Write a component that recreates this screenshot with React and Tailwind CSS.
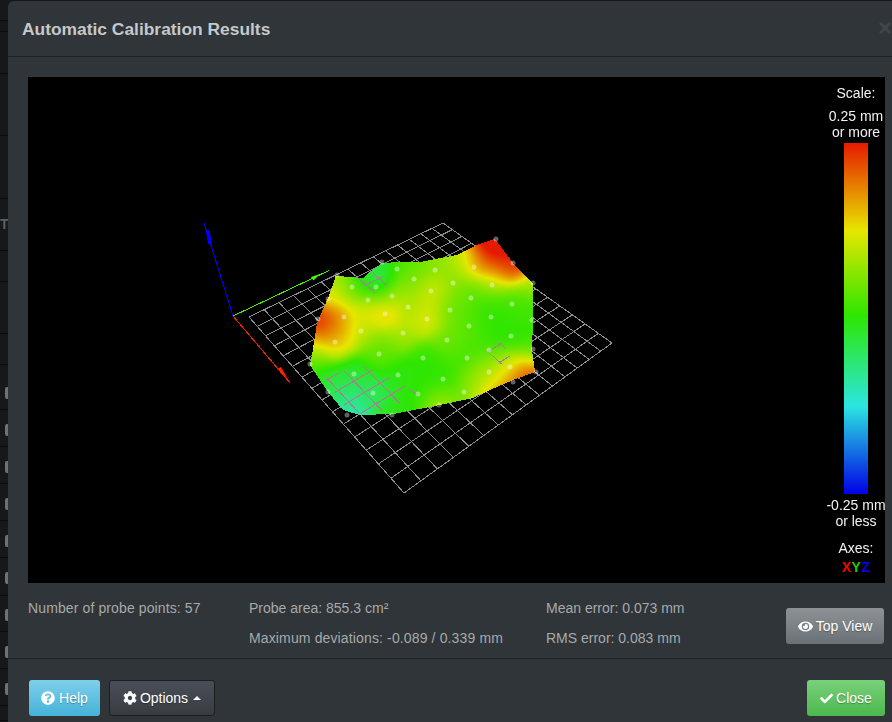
import React, { useEffect, useRef } from "react";
import { FaQuestionCircle, FaCog, FaEye, FaCheck } from "react-icons/fa";

const W = 857, H = 506, OX = 28, OY = 77;
const L = [249, 317], B = [404, 493], R = [612, 343], T = [443, 223];

function homography(p0, p1, p2, p3) {
  const dx1 = p1[0] - p2[0], dx2 = p3[0] - p2[0], sx = p0[0] - p1[0] + p2[0] - p3[0];
  const dy1 = p1[1] - p2[1], dy2 = p3[1] - p2[1], sy = p0[1] - p1[1] + p2[1] - p3[1];
  const d = dx1 * dy2 - dx2 * dy1;
  const g = (sx * dy2 - dx2 * sy) / d, h = (dx1 * sy - sx * dy1) / d;
  const a = p1[0] - p0[0] + g * p1[0], b = p3[0] - p0[0] + h * p3[0], c = p0[0];
  const e = p1[1] - p0[1] + g * p1[1], f = p3[1] - p0[1] + h * p3[1], k = p0[1];
  return (u, v) => {
    const w = g * u + h * v + 1;
    return [(a * u + b * v + c) / w, (e * u + f * v + k) / w];
  };
}
const project = homography(L, B, R, T);
const CELLS = 15;
const seg = ([a, b]) => `M${a[0].toFixed(1)} ${a[1].toFixed(1)}L${b[0].toFixed(1)} ${b[1].toFixed(1)}`;
let gridPath = "";
for (let i = 0; i <= CELLS; i++) {
  gridPath += seg([project(i / CELLS, 0), project(i / CELLS, 1)]);
  gridPath += seg([project(0, i / CELLS), project(1, i / CELLS)]);
}

const outline = [
  [336, 276], [353, 277], [363, 278], [370, 272], [382, 263], [400, 262], [420, 262], [457, 255], [477, 245], [495, 239],
  [513, 263], [533, 283], [533, 320], [532, 350], [535, 372], [513, 380], [490, 390], [473, 398], [440, 405], [393, 414],
  [360, 415], [343, 410], [328, 392], [310, 365], [312, 355], [317, 323], [328, 298],
];

const z = (pts) => pts.map(([x, y]) => `${300 + x / 3},${230 + y / 3}`).join(" ");
const pinkPolys = [
  z([[75, 445], [125, 425], [195, 410], [220, 420], [320, 470], [365, 490], [220, 555], [145, 545]]),
  z([[160, 140], [195, 135], [240, 125], [262, 165], [225, 190], [190, 165]]),
  z([[555, 360], [605, 335], [630, 380], [620, 400], [600, 405], [585, 385]]),
];

const anchors = [
  [585, 30, 1.15], [620, 70, 1.05], [640, 100, 1.0], [560, 60, 1.0], [600, 110, .86], [520, 90, .8], [695, 160, .67], [580, 165, .66], [470, 85, .66], [400, 100, .62], [330, 100, .55], [250, 100, .5],
  [215, 130, .36], [190, 150, .34], [225, 175, .4], [170, 145, .55], [110, 140, .68], [155, 170, .72], [205, 210, .74], [90, 210, .74], [275, 195, .66], [340, 150, .6], [395, 180, .74], [460, 160, .62], [515, 205, .56], [575, 240, .5], [635, 220, .53], [690, 230, .52], [695, 340, .5],
  [55, 280, 1.05], [70, 290, .98], [100, 290, .9], [130, 290, .78], [105, 335, .72], [45, 340, .68], [35, 400, .57], [185, 300, .68], [255, 252, .84], [200, 255, .74], [330, 230, .66], [380, 268, .76], [310, 310, .66], [240, 335, .6], [450, 240, .58], [510, 288, .56], [440, 330, .58], [570, 260, .5], [240, 370, .55], [370, 385, .5], [500, 385, .53], [570, 360, .5], [630, 315, .5],
  [560, 410, .58], [568, 425, .74], [600, 440, .68], [560, 460, .6], [620, 425, .78], [700, 425, 1.0], [660, 440, 1.0], [650, 448, 1.0], [570, 495, 1.0], [610, 470, 1.0], [530, 465, .62], [490, 490, .58], [420, 525, .66], [430, 445, .5], [350, 490, .5], [295, 435, .48], [280, 550, .48], [220, 490, .4], [150, 545, .3], [135, 500, .36], [85, 480, .42], [70, 450, .45], [165, 430, .45], [630, 410, .56], [700, 380, .6],
].map(([x, y, v]) => [300 + x / 3, 230 + y / 3, v]);

const stops = [
  [0, [0, 0, 230]], [.25, [42, 230, 224]], [.5, [46, 230, 0]], [.75, [230, 230, 0]], [1, [230, 26, 0]],
];
function colorAt(v) {
  const t = Math.max(0, Math.min(1, v));
  for (let i = 1; i < stops.length; i++) {
    if (t <= stops[i][0]) {
      const [a, ca] = stops[i - 1], [b, cb] = stops[i];
      const m = (t - a) / (b - a);
      return ca.map((c, j) => c + (cb[j] - c) * m);
    }
  }
  return stops[4][1];
}
function inside(x, y) {
  let c = false;
  for (let i = 0, j = outline.length - 1; i < outline.length; j = i++) {
    const [xi, yi] = outline[i], [xj, yj] = outline[j];
    if (yi > y !== yj > y && x < ((xj - xi) * (y - yi)) / (yj - yi) + xi) c = !c;
  }
  return c;
}

const dots = [
  [382, 262], [337, 275], [352, 287], [376, 287], [397, 269], [392, 296], [368, 300], [408, 307], [328, 299], [344, 317], [385, 314], [403, 333], [361, 331], [318, 319], [335, 342], [379, 354], [398, 375], [354, 374], [310, 364],
  [496, 239], [513, 263], [533, 283], [474, 267], [492, 285], [435, 270], [414, 279], [453, 283], [431, 291], [471, 298], [512, 304], [532, 320], [450, 310], [491, 317], [427, 319], [469, 326], [511, 336], [447, 340], [489, 350], [533, 349], [423, 358], [467, 358], [510, 367], [489, 372], [536, 372], [443, 379], [513, 382],
  [328, 392], [347, 415], [392, 415], [439, 405], [418, 394], [373, 393], [464, 392],
];

function Surface() {
  const ref = useRef(null);
  useEffect(() => {
    const ctx = ref.current.getContext("2d");
    const img = ctx.createImageData(W, H);
    const s2 = 2 * 12 * 12;
    for (let y = 230; y < 425; y++) {
      for (let x = 300; x < 545; x++) {
        if (!inside(x + 0.5, y + 0.5)) continue;
        let sw = 0, sv = 0;
        for (const [ax, ay, v] of anchors) {
          const d = (ax - x) ** 2 + (ay - y) ** 2;
          const w = Math.exp(-d / s2);
          sw += w;
          sv += w * v;
        }
        const c = colorAt(sw > 1e-6 ? sv / sw : 0.5);
        const i = ((y - OY) * W + (x - OX)) * 4;
        img.data[i] = c[0];
        img.data[i + 1] = c[1];
        img.data[i + 2] = c[2];
        img.data[i + 3] = 255;
      }
    }
    ctx.putImageData(img, 0, 0);
  }, []);
  return <canvas ref={ref} width={W} height={H} className="absolute inset-0" />;
}

const viewBox = `${OX} ${OY} ${W} ${H}`;

function Under() {
  return (
    <svg className="absolute inset-0" width={W} height={H} viewBox={viewBox}>
      <path d={gridPath} stroke="#8e8e8e" strokeWidth="1" fill="none" shapeRendering="crispEdges" />
      <line x1="233" y1="316" x2="204" y2="223" stroke="#0000ff" strokeWidth="1" shapeRendering="crispEdges" />
      <polygon points="206,231 209.5,230.5 212,243 208,244" fill="#0000ff" />
      <line x1="233" y1="316" x2="329" y2="270.5" stroke="#44ee00" strokeWidth="1" shapeRendering="crispEdges" />
      <polygon points="311,277 320,274 313.5,280.5" fill="#44ff00" />
      <line x1="233" y1="316" x2="290" y2="383" stroke="#ff2200" strokeWidth="1" shapeRendering="crispEdges" />
      <polygon points="277,369 281,367 288,379" fill="#ff2200" />
    </svg>
  );
}

function Over() {
  return (
    <svg className="absolute inset-0" width={W} height={H} viewBox={viewBox}>
      <defs>
        <clipPath id="pink">
          {pinkPolys.map((p) => (
            <polygon key={p} points={p} />
          ))}
        </clipPath>
      </defs>
      <path d={gridPath} stroke="#ad7a9c" strokeWidth="1" fill="none" shapeRendering="crispEdges" clipPath="url(#pink)" />
      {dots.map(([x, y]) => (
        <circle key={`${x}-${y}`} cx={x} cy={y} r="2.5" fill="#ffffff" fillOpacity="0.38" />
      ))}
    </svg>
  );
}

function Legend() {
  return (
    <div className="absolute right-0 top-0 h-full w-[58px] flex flex-col items-center text-[14px] leading-4 text-[#f2f2f2] whitespace-nowrap">
      <div className="mt-2">Scale:</div>
      <div className="mt-[7px]">0.25 mm</div>
      <div>or more</div>
      <div className="mt-[3px] w-6 h-[351px] shrink-0 bg-[linear-gradient(to_bottom,#e61a00_0%,#e6e600_25%,#2ee600_49%,#2ae6e0_75%,#0000e6_100%)]" />
      <div className="mt-[3px]">-0.25 mm</div>
      <div>or less</div>
      <div className="mt-[11px]">Axes:</div>
      <div className="mt-[3px] font-bold tracking-[0.3px]">
        <span className="text-[#ff0000]">X</span>
        <span className="text-[#22cc00]">Y</span>
        <span className="text-[#0000ff]">Z</span>
      </div>
    </div>
  );
}

const rows = [
  { h: 21 }, { h: 11 }, { h: 42 }, { h: 62 }, { h: 63 }, { h: 52, label: "To" }, { h: 31 }, { h: 52 }, { h: 31 },
  { h: 45, handle: "pt-[11px]" }, { h: 37, handle: "pt-[3px]" }, { h: 37, handle: "pt-[3px]" }, { h: 37, handle: "pt-[3px]" }, { h: 37, handle: "pt-[3px]" }, { h: 38, handle: "pt-[3px]" }, { h: 36, handle: "pt-[3px]" }, { h: 37, handle: "pt-[3px]" }, { h: 37, handle: "pt-[3px]" }, { h: 15 },
];

const btn = "flex items-center justify-center h-9 rounded-[3px] text-[14px] text-white [text-shadow:0_1px_1px_rgba(0,0,0,0.3)]";

export default function App() {
  return (
    <div className="w-[892px] h-[722px] overflow-hidden bg-[#16181a] flex font-['Liberation_Sans',Arial,sans-serif]">
      <div className="w-2 shrink-0 flex flex-col">
        {rows.map((r, i) => (
          <div key={i} style={{ height: r.h }} className={`shrink-0 border-b border-[#0a0b0c] flex items-center justify-end overflow-hidden ${r.handle || ""}`}>
            {r.label && <span className="text-[14px] font-bold text-[#5c5f61] -mr-[7px] w-[15px]">{r.label}</span>}
            {r.handle && <div className="w-[3px] h-3 rounded-l-[2px] bg-[#6f7173]" />}
          </div>
        ))}
      </div>
      <div className="flex-1 min-w-0 mt-px h-[721px] rounded-tl-md bg-[#2f3539] flex flex-col">
        <div className="h-14 shrink-0 border-b border-[#1e2225] pl-3.5 flex items-center justify-between">
          <h3 className="text-[17.4px] font-bold text-[#c6c8c9] mt-[1px]">Automatic Calibration Results</h3>
          <span className="text-[24px] font-bold leading-none text-[#41464a] -mt-[1px]">×</span>
        </div>
        <div className="pt-5 pl-5 pr-[7px]">
          <div className="relative h-[506px] bg-black">
            <Under />
            <Surface />
            <Over />
            <Legend />
          </div>
          <div className="h-[75px] flex text-[14px] leading-5 text-[#a7a9aa]">
            <div className="w-[221px] pt-[15px] tracking-[0.115px]">Number of probe points: 57</div>
            <div className="w-[297px] pt-[15px] flex flex-col gap-2.5">
              <div>Probe area: 855.3 cm²</div>
              <div className="tracking-[0.135px]">Maximum deviations: -0.089 / 0.339 mm</div>
            </div>
            <div className="flex-1 pt-[15px] flex flex-col gap-2.5">
              <div>Mean error: 0.073 mm</div>
              <div>RMS error: 0.083 mm</div>
            </div>
            <button className={`${btn} mt-[25px] mr-px w-[98px] gap-[3px] bg-[linear-gradient(to_bottom,#8d9295,#6a7176)]`}>
              <FaEye className="text-[15px]" />
              Top View
            </button>
          </div>
        </div>
        <div className="flex-1 border-t border-[#1e2225] pt-[21px] pl-[21px] pr-[7px] flex">
          <button className={`${btn} w-[71px] gap-1 bg-[linear-gradient(to_bottom,#7fcfea,#44b2d9)]`}>
            <FaQuestionCircle className="text-[14px]" />
            Help
          </button>
          <button className={`${btn} ml-[9px] w-[106px] gap-[3px] border border-[#1c1f22] bg-[linear-gradient(to_bottom,#4a4e58,#383c42)]`}>
            <FaCog className="text-[14px]" />
            Options
            <span className="ml-[2px] w-0 h-0 border-x-4 border-x-transparent border-b-4 border-b-white" />
          </button>
          <button className={`${btn} ml-auto w-[78px] gap-[3px] bg-[linear-gradient(to_bottom,#7bd07b,#4bb84c)]`}>
            <FaCheck className="text-[13px]" />
            Close
          </button>
        </div>
      </div>
    </div>
  );
}
